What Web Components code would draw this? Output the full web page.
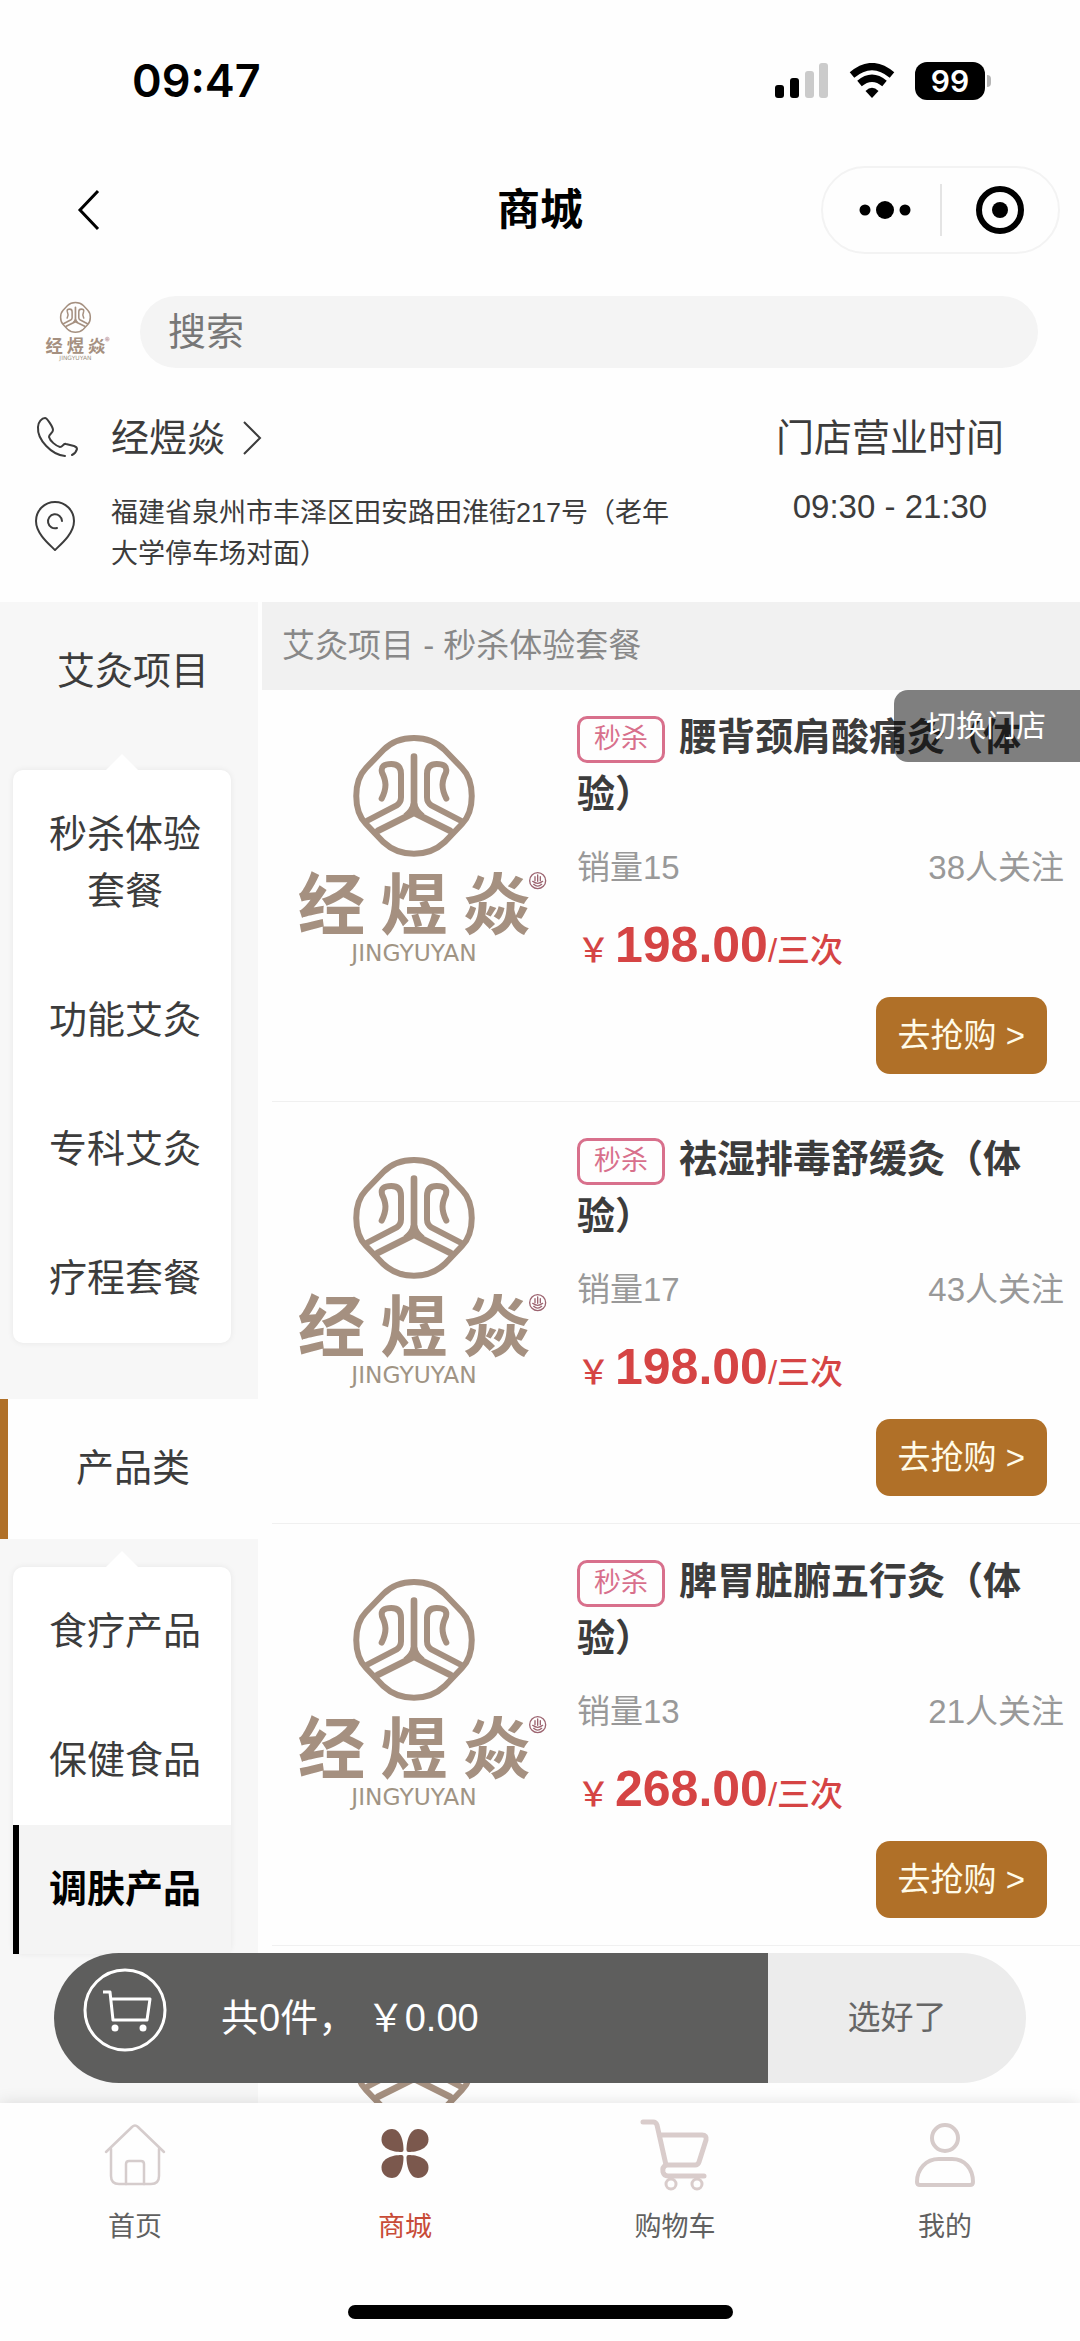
<!DOCTYPE html>
<html lang="zh-CN">
<head>
<meta charset="utf-8">
<meta name="viewport" content="width=device-width, initial-scale=1">
<title>商城</title>
<style>
html, body {
    margin: 0;
    height: 100%;
}
body {
    font-family: "Liberation Sans", "Noto Sans CJK SC", sans-serif;
    color: #3c3c3c;
    background: #fefefe;
}
</style>
</head>
<body>
<shop-app>
    <status-bar slot="top" battery="99">09:47</status-bar>
    <nav-bar slot="top">商城</nav-bar>
    <search-row slot="top" placeholder="搜索"></search-row>
    <store-info slot="top" address="福建省泉州市丰泽区田安路田淮街217号（老年大学停车场对面）" hours="09:30 - 21:30">经煜焱</store-info>

    <side-category slot="side" label="艾灸项目">
        <side-item>秒杀体验套餐</side-item>
        <side-item>功能艾灸</side-item>
        <side-item>专科艾灸</side-item>
        <side-item>疗程套餐</side-item>
    </side-category>
    <side-category slot="side" label="产品类" active>
        <side-item>食疗产品</side-item>
        <side-item>保健食品</side-item>
        <side-item active>调肤产品</side-item>
    </side-category>

    <goods-list heading="艾灸项目 - 秒杀体验套餐">
        <goods-item sales="15" follows="38" price="198.00" unit="三次">腰背颈肩酸痛灸（体验）</goods-item>
        <goods-item sales="17" follows="43" price="198.00" unit="三次">祛湿排毒舒缓灸（体验）</goods-item>
        <goods-item sales="13" follows="21" price="268.00" unit="三次">脾胃脏腑五行灸（体验）</goods-item>
        <goods-item></goods-item>
    </goods-list>

    <cart-bar slot="cart" count="0" total="0.00"></cart-bar>

    <tab-item slot="tab" icon="home">首页</tab-item>
    <tab-item slot="tab" icon="mall" active>商城</tab-item>
    <tab-item slot="tab" icon="cart">购物车</tab-item>
    <tab-item slot="tab" icon="user">我的</tab-item>
</shop-app>

<script>
const RESET = `
    * { box-sizing: border-box; }
    svg { display: block; flex: none; }
    button {
        margin: 0;
        padding: 0;
        border: 0;
        background: none;
        color: inherit;
        font: inherit;
        cursor: pointer;
    }
    a { color: inherit; text-decoration: none; }
`;

class ShopElement extends HTMLElement {
    constructor() {
        super();
        this.attachShadow({mode: "open"});
    }

    connectedCallback() {
        this.shadowRoot.innerHTML = `<style>${RESET}${this.css()}</style>${this.html()}`;
    }

    attr(name) {
        return this.getAttribute(name) || "";
    }

    css() {
        return "";
    }

    html() {
        return "<slot></slot>";
    }
}

class ShopApp extends ShopElement {
    css() {
        return `
        :host {
            display: flex;
            flex-direction: column;
            height: 100vh;
            overflow: hidden;
        }
        main {
            position: relative;
            display: flex;
            flex: 1;
            gap: 4px;
            min-height: 0;
            overflow: hidden;
        }
        aside {
            flex: none;
            width: 258px;
            background: #f7f7f7;
        }
        .goods {
            flex: 1;
            min-width: 0;
        }
        .cart {
            position: absolute;
            left: 5%;
            right: 5%;
            bottom: 20px;
        }
        footer {
            position: relative;
            background: #fefefe;
            box-shadow: 0 0 16px rgba(0, 0, 0, .12);
        }
        nav {
            display: flex;
        }
        .home {
            width: 385px;
            height: 14px;
            margin: 60px auto 22px;
            border-radius: 7px;
            background: #000;
        }
        `;
    }

    html() {
        return `
        <header><slot name="top"></slot></header>
        <main>
            <aside><slot name="side"></slot></aside>
            <section class="goods"><slot></slot></section>
            <div class="cart"><slot name="cart"></slot></div>
        </main>
        <footer>
            <nav><slot name="tab"></slot></nav>
            <div class="home"></div>
        </footer>
        `;
    }
}

class StatusBar extends ShopElement {
    css() {
        return `
        :host {
            display: flex;
            align-items: center;
            justify-content: space-between;
            height: 162px;
            padding: 0 89px 0 132px;
            color: #000;
            font: 600 45px/56px Inter, sans-serif;
        }
        .icons {
            display: flex;
            align-items: center;
            gap: 20px;
        }
        .battery {
            display: flex;
            align-items: center;
            gap: 2px;
        }
        .level {
            width: 70px;
            border-radius: 12px;
            background: #000;
            color: #fff;
            font-size: 30px;
            line-height: 38px;
            text-align: center;
        }
        .nub {
            width: 4px;
            height: 12px;
            border-radius: 0 4px 4px 0;
            background: #b5b5b5;
        }
        `;
    }

    html() {
        return `
        <slot></slot>
        <div class="icons">
            <svg width="54" height="36" viewBox="0 0 54 36">
                <rect x="0" y="22" width="9" height="13" rx="3"/>
                <rect x="15" y="15" width="9" height="20" rx="3"/>
                <rect x="30" y="8" width="9" height="27" rx="3" fill="#cbcbcb"/>
                <rect x="44" y="0" width="9" height="35" rx="3" fill="#cbcbcb"/>
            </svg>
            <svg width="46" height="36" viewBox="0 0 46 36">
                <g fill="none" stroke="#000" stroke-width="7">
                    <path d="M3 12Q23 -5 43 12"/>
                    <path d="M10.500 20.500Q23 10 35.500 20.500"/>
                </g>
                <path d="M23 35 16.500 28Q23 21.500 29.500 28Z"/>
            </svg>
            <div class="battery">
                <span class="level">${this.attr("battery")}</span>
                <span class="nub"></span>
            </div>
        </div>
        `;
    }
}

class NavBar extends ShopElement {
    css() {
        return `
        :host {
            display: grid;
            grid-template-columns: 1fr auto 1fr;
            align-items: center;
            height: 96px;
            padding: 0 20px 0 74px;
            color: #000;
        }
        h1 {
            margin: 0 54px 0 0;
            font-size: 43px;
            line-height: 60px;
        }
        .back {
            justify-self: start;
        }
        .capsule {
            justify-self: end;
            display: flex;
            align-items: center;
            width: 239px;
            height: 88px;
            border: 2px solid #f3f3f3;
            border-radius: 44px;
        }
        .capsule button {
            display: flex;
            flex: 1;
            justify-content: center;
        }
        .capsule button + button {
            border-left: 2px solid #e4e4e4;
        }
        `;
    }

    html() {
        return `
        <button class="back" aria-label="返回">
            <svg width="28" height="44" viewBox="0 0 28 44" fill="none" stroke="#000" stroke-width="3">
                <path d="M24 3 6 22 24 41"/>
            </svg>
        </button>
        <h1><slot></slot></h1>
        <div class="capsule">
            <button aria-label="更多">
                <svg width="60" height="52" viewBox="0 0 60 52">
                    <circle cx="14" cy="26" r="5.500"/>
                    <circle cx="34" cy="26" r="9"/>
                    <circle cx="54" cy="26" r="5.500"/>
                </svg>
            </button>
            <button aria-label="关闭">
                <svg width="50" height="52" viewBox="0 0 50 52">
                    <circle cx="25" cy="26" r="21" fill="none" stroke="#000" stroke-width="6"/>
                    <circle cx="25" cy="26" r="8"/>
                </svg>
            </button>
        </div>
        `;
    }
}

class BrandLogo extends ShopElement {
    css() {
        return `
        :host {
            display: block;
            flex: none;
            width: 280px;
        }
        svg {
            width: 100%;
        }
        `;
    }

    html() {
        return `
        <svg viewBox="0 -3 840 870" role="img" aria-label="经煜焱">
            <g fill="none" stroke="#a59080" stroke-width="18" stroke-linecap="round">
                <path d="M402 84C444 84 472 98 494 120L546 174C585 214 585 302 546 342L494 396C444 443 360 443 310 396L258 342C219 302 219 214 258 174L310 120C332 98 360 84 402 84Z"/>
                <path d="M262 332 350 286Q363 278 363 262V192Q363 162 334 162 300 162 306 187C318 212 322 232 305 266"/>
                <path d="M542 332 454 286Q441 278 441 262V192Q441 162 470 162 504 162 498 187C486 212 482 232 499 266"/>
                <path d="M402 140V304M402 308 294 362M402 308 510 362" stroke-width="20"/>
            </g>
            <path d="M392 280Q390 296 370 312H434Q414 296 412 280Z" fill="#a59080"/>
            <text x="402" y="658" text-anchor="middle" fill="#a59080" font-family="Noto Sans CJK SC, sans-serif" font-weight="700" font-size="202">经 煜 焱</text>
            <text x="402" y="754" text-anchor="middle" fill="#a09484" font-family="DejaVu Sans, sans-serif" font-size="70">JINGYUYAN</text>
            <g fill="none" stroke="#9c6470" stroke-width="4">
                <circle cx="773" cy="512" r="24"/>
                <path d="M773 495V514M765 500V512M781 500V512M758 514Q773 526 788 514M761 523Q773 534 785 523" stroke-linecap="round"/>
            </g>
        </svg>
        `;
    }
}

class SearchRow extends ShopElement {
    css() {
        return `
        :host {
            display: flex;
            align-items: center;
            gap: 27px;
            padding: 37px 42px 0 41px;
        }
        brand-logo {
            width: 72px;
        }
        input {
            flex: 1;
            min-width: 0;
            height: 72px;
            padding: 0 28px;
            border: 0;
            border-radius: 36px;
            background: #f4f4f4;
            color: #333;
            font: inherit;
            font-size: 38px;
            outline: 0;
        }
        input::placeholder {
            color: #777;
            opacity: 1;
        }
        `;
    }

    html() {
        const hint = this.attr("placeholder");
        return `
        <brand-logo></brand-logo>
        <input type="search" placeholder="${hint}" aria-label="${hint}">
        `;
    }
}

class StoreInfo extends ShopElement {
    css() {
        return `
        :host {
            display: flex;
            justify-content: space-between;
            padding: 44px 76px 27px 34px;
        }
        .row {
            display: flex;
            gap: 33px;
        }
        .contact {
            align-items: center;
            margin-bottom: 31px;
        }
        .name {
            display: flex;
            align-items: center;
            gap: 16px;
        }
        .name, .title {
            font-size: 38px;
            line-height: 48px;
        }
        address {
            width: 572px;
            font-size: 27px;
            font-style: normal;
            line-height: 41px;
        }
        .hours {
            text-align: center;
        }
        .time {
            margin-top: 25px;
            font-size: 33px;
            line-height: 40px;
        }
        `;
    }

    html() {
        return `
        <div>
            <div class="row contact">
                <svg width="44" height="44" viewBox="0 0 44 44" fill="none" stroke="#3c3c3c" stroke-width="2" stroke-linejoin="round" stroke-linecap="round">
                    <path d="M31 40C18 39 3 24 4 11 4 6 8 2 11 2 13 2 19 11 19 14 19 17 15 18 15 21 16 25 22 30 26 31 29 31 29 27 32 28L40 30Q43 31 43 33 42 37 38 39"/>
                </svg>
                <button class="name">
                    <slot></slot>
                    <svg width="22" height="36" viewBox="0 0 22 36" fill="none" stroke="#3c3c3c" stroke-width="2">
                        <path d="M3 2 19 18 3 34"/>
                    </svg>
                </button>
            </div>
            <div class="row">
                <svg width="44" height="66" viewBox="0 0 44 66" fill="none" stroke="#3c3c3c" stroke-width="2" stroke-linecap="round" stroke-linejoin="round">
                    <path d="M21 57C16 52 2 41 2 28A19 19 0 0 1 40 28C40 41 26 52 21 57Z"/>
                    <path d="M23 35A7 7 0 1 1 28 28"/>
                </svg>
                <address>${this.attr("address")}</address>
            </div>
        </div>
        <div class="hours">
            <div class="title">门店营业时间</div>
            <div class="time">${this.attr("hours")}</div>
        </div>
        `;
    }
}

class SideCategory extends ShopElement {
    css() {
        return `
        :host {
            display: block;
            margin-bottom: 56px;
            font-size: 38px;
        }
        .label {
            display: block;
            width: 100%;
            height: 140px;
            border-left: 8px solid transparent;
            line-height: 57px;
        }
        :host([active]) .label {
            border-color: #b07028;
            background: #fefefe;
        }
        .panel {
            position: relative;
            margin: 28px 27px 0 13px;
            border-radius: 10px;
            background: #fff;
            box-shadow: 0 0 6px rgba(0, 0, 0, .07);
        }
        .panel::before {
            content: "";
            position: absolute;
            top: -16px;
            left: 50%;
            margin-left: -16px;
            border: 16px solid transparent;
            border-top: 0;
            border-bottom-color: #fff;
        }
        `;
    }

    html() {
        return `
        <button class="label">${this.attr("label")}</button>
        <div class="panel"><slot></slot></div>
        `;
    }
}

class SideItem extends ShopElement {
    css() {
        return `
        :host {
            display: block;
        }
        button {
            width: 100%;
            padding: 36px 28px;
            border-left: 6px solid transparent;
            line-height: 57px;
        }
        :host([active]) button {
            border-color: #000;
            background: #f4f4f4;
            color: #000;
            font-weight: 700;
        }
        `;
    }

    html() {
        return "<button><slot></slot></button>";
    }
}

class GoodsList extends ShopElement {
    css() {
        return `
        :host {
            position: relative;
            display: flex;
            flex-direction: column;
            gap: 10px;
        }
        .head {
            position: relative;
            margin-bottom: -10px;
        }
        h2 {
            margin: 0;
            padding: 0 20px;
            background: #f1f1f1;
            color: #888;
            font-size: 33px;
            font-weight: 400;
            line-height: 88px;
        }
        .switch {
            position: absolute;
            z-index: 1;
            top: 100%;
            right: 0;
            padding: 0 34px 0 32px;
            border-radius: 14px 0 0 14px;
            background: rgba(0, 0, 0, .5);
            color: #fff;
            font-size: 30px;
            line-height: 72px;
        }
        `;
    }

    html() {
        return `
        <div class="head">
            <h2>${this.attr("heading")}</h2>
            <button class="switch">切换门店</button>
        </div>
        <slot></slot>
        `;
    }
}

class GoodsItem extends ShopElement {
    css() {
        return `
        :host {
            display: flex;
            gap: 17px;
            margin-left: 10px;
            padding: 19px 16px 27px 8px;
            border-bottom: 1px solid #f0f0f0;
        }
        .info {
            flex: 1;
            min-width: 0;
        }
        h3 {
            margin: 0;
            font-size: 38px;
            line-height: 57px;
        }
        .badge {
            display: inline-block;
            margin-right: 14px;
            padding: 0 14px;
            border: 3px solid #d8708c;
            border-radius: 10px;
            color: #d8708c;
            font-size: 27px;
            font-weight: 400;
            line-height: 41px;
            vertical-align: middle;
        }
        .meta {
            display: flex;
            justify-content: space-between;
            margin-top: 25px;
            color: #999;
            font-size: 33px;
            line-height: 40px;
        }
        .price {
            display: flex;
            align-items: baseline;
            height: 60px;
            margin-top: 27px;
            color: #d54444;
            font-size: 33px;
            font-weight: 500;
            line-height: 60px;
        }
        .price b {
            margin-left: 5px;
            font-size: 50px;
        }
        .buy {
            display: block;
            margin: 22px 17px 0 auto;
            padding: 0 22px;
            border-radius: 14px;
            background: #b07028;
            color: #fffbe8;
            font-size: 33px;
            line-height: 77px;
        }
        `;
    }

    html() {
        if (!this.hasAttribute("price")) {
            return "<brand-logo></brand-logo>";
        }
        return `
        <brand-logo></brand-logo>
        <div class="info">
            <h3><span class="badge">秒杀</span><slot></slot></h3>
            <div class="meta">
                <span>销量${this.attr("sales")}</span>
                <span>${this.attr("follows")}人关注</span>
            </div>
            <div class="price">￥<b>${this.attr("price")}</b>/${this.attr("unit")}</div>
            <button class="buy">去抢购 &gt;</button>
        </div>
        `;
    }
}

class CartBar extends ShopElement {
    css() {
        return `
        :host {
            display: flex;
            height: 130px;
            border-radius: 65px;
            overflow: hidden;
        }
        .summary {
            display: flex;
            flex: 1;
            align-items: center;
            gap: 54px;
            padding-left: 29px;
            background: #5e5e5d;
            color: #fff;
            font-size: 38px;
            line-height: 57px;
        }
        .summary svg {
            margin-bottom: 16px;
        }
        .done {
            width: 258px;
            background: #ececec;
            color: #666;
            font-size: 33px;
            line-height: 40px;
        }
        `;
    }

    html() {
        return `
        <div class="summary">
            <svg width="84" height="86" viewBox="0 0 84 86" fill="none" stroke="#fff" stroke-width="3">
                <circle cx="42" cy="43" r="40"/>
                <path d="M20 25H27L30 53H64L67 32H28" stroke-linejoin="round"/>
                <circle cx="32" cy="61" r="3.500" fill="#fff" stroke="none"/>
                <circle cx="60" cy="61" r="3.500" fill="#fff" stroke="none"/>
            </svg>
            <span>共${this.attr("count")}件， ￥${this.attr("total")}</span>
        </div>
        <button class="done">选好了</button>
        `;
    }
}

const PETAL = "M36.500 39C28 39 16.500 36 16.500 26.500 16.500 20.500 21 16 27 16 35 16 38.500 27 38.500 37Q38.500 39 36.500 39Z";

const TAB_ICONS = {
    home: `
        <g fill="none" stroke="#d5cccc" stroke-width="2.500" stroke-linecap="round" stroke-linejoin="round">
            <path d="M11 39 37 14Q40 11 43 14L69 39"/>
            <path d="M16 36V63Q16 71 24 71H56Q64 71 64 63V36"/>
            <path d="M31 71V51Q31 48 34 48H46Q49 48 49 51V71"/>
        </g>`,
    mall: `
        <g fill="#7b584d">
            <path d="${PETAL}"/>
            <path d="${PETAL}" transform="matrix(-1 0 0 1 80 0)"/>
            <path d="${PETAL}" transform="matrix(1 0 0 -1 0 81)"/>
            <path d="${PETAL}" transform="matrix(-1 0 0 -1 80 81)"/>
        </g>`,
    cart: `
        <g fill="none" stroke="#d9cccb" stroke-width="5" stroke-linecap="round" stroke-linejoin="round">
            <path d="M8 9H18Q21 9 22 12L31 52H60Q63 52 64 49L71 27Q72 22 67 22H25"/>
            <path d="M31 52Q27 54 28 59 29 63 33 63H69"/>
            <circle cx="36" cy="71" r="5" stroke-width="3"/>
            <circle cx="62" cy="71" r="5" stroke-width="3"/>
        </g>`,
    user: `
        <g fill="none" stroke="#d6cbca" stroke-width="4" stroke-linejoin="round">
            <circle cx="40" cy="25" r="13"/>
            <path d="M34 46H47C60 46 68 56 68 69Q68 72 65 72H15Q12 72 12 69C12 56 21 46 34 46Z"/>
        </g>`,
};

class TabItem extends ShopElement {
    css() {
        return `
        :host {
            flex: 1;
        }
        a {
            display: flex;
            flex-direction: column;
            align-items: center;
            gap: 16px;
            padding-top: 10px;
            color: #606060;
            font-size: 27px;
            line-height: 36px;
        }
        :host([active]) a {
            color: #c84b37;
        }
        `;
    }

    html() {
        return `
        <a href="#${this.attr("icon")}">
            <svg width="80" height="80" viewBox="0 0 80 80">${TAB_ICONS[this.attr("icon")]}</svg>
            <span><slot></slot></span>
        </a>
        `;
    }
}

customElements.define("shop-app", ShopApp);
customElements.define("status-bar", StatusBar);
customElements.define("nav-bar", NavBar);
customElements.define("brand-logo", BrandLogo);
customElements.define("search-row", SearchRow);
customElements.define("store-info", StoreInfo);
customElements.define("side-category", SideCategory);
customElements.define("side-item", SideItem);
customElements.define("goods-list", GoodsList);
customElements.define("goods-item", GoodsItem);
customElements.define("cart-bar", CartBar);
customElements.define("tab-item", TabItem);
</script>
</body>
</html>
